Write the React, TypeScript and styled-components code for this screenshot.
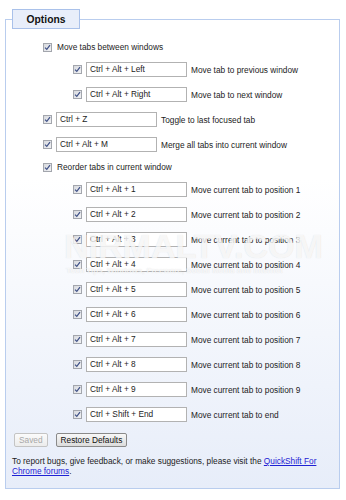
import React from "react";
import styled, {createGlobalStyle} from "styled-components";

const GlobalStyle = createGlobalStyle`
  html, body {
    margin: 0;
    padding: 0;
    background: #fff;
  }
  body {
    font-family: "Liberation Sans", Arial, sans-serif;
    font-size: 8.3px;
    color: #1c1c1c;
  }
`;

const Page = styled.div`
  position: relative;
  width: 346px;
  height: 500px;
  overflow: hidden;
  padding: 9px 6px 0 5px;
  box-sizing: border-box;
`;

const Panel = styled.fieldset`
  margin: 0;
  height: 480px;
  box-sizing: border-box;
  border: 1px solid #b9cdee;
  padding: 0 6px 0 6px;
  background: linear-gradient(to bottom, #ffffff 0%, #ffffff 34%, #e7edf9 100%);
`;

const Legend = styled.legend`
  box-sizing: border-box;
  width: 68px;
  height: 20px;
  padding: 0;
  margin: 0;
  border: 1px solid #a9c1ea;
  background: #e8eefa;
`;

const LegendText = styled.span`
  display: flex;
  justify-content: center;
  align-items: center;
  height: 18px;
  font-size: 10.3px;
  font-weight: bold;
  color: #111;
`;

const List = styled.div`
  display: flex;
  flex-direction: column;
  gap: 10px;
  margin-top: 13px;
`;

const Row = styled.div<{ $level: number; $plain?: boolean }>`
  display: flex;
  align-items: center;
  height: ${p => (p.$plain ? 10 : 15)}px;
  padding-left: ${p => (p.$level === 1 ? 31 : 61)}px;
  white-space: nowrap;
`;

const Check = styled.span`
  display: inline-flex;
  align-items: center;
  justify-content: center;
  box-sizing: border-box;
  width: 9px;
  height: 9px;
  border: 1px solid #a3a6ad;
  background: linear-gradient(to bottom right, #d7d9de, #f1f2f4);
  flex-shrink: 0;
`;

const Key = styled.div`
  box-sizing: border-box;
  width: 101px;
  height: 15px;
  border: 1px solid #b2b2b2;
  background: #fff;
  padding-left: 3px;
  line-height: 13px;
  margin-left: 4px;
  flex-shrink: 0;
`;

const Label = styled.span<{ $afterKey?: boolean }>`
  margin-left: ${p => (p.$afterKey ? 4 : 5)}px;
`;

const Buttons = styled.div`
  display: flex;
  gap: 8px;
  margin-top: 11px;
  padding-left: 2px;
`;

const Button = styled.button`
  box-sizing: border-box;
  height: 14px;
  padding: 0 4px;
  font-family: inherit;
  font-size: 8.3px;
  line-height: 12px;
  border: 1px solid #8a8a8a;
  border-radius: 2px;
  background: linear-gradient(to bottom, #f8f8f8, #dcdcdc);
  color: #111;

  &:disabled {
    border-color: #c4c4c4;
    color: #a8a8a8;
    background: linear-gradient(to bottom, #fbfbfb, #ececec);
  }
`;

const Footer = styled.p`
  margin: 9px 0 0 0;
  line-height: 10px;
  width: 312px;
`;

const Link = styled.a`
  color: #1f22d4;
  text-decoration: underline;
`;

const Watermark = styled.div`
  position: absolute;
  left: 64px;
  top: 228px;
  width: 276px;
  pointer-events: none;
  color: rgba(255, 255, 255, 0.75);
  text-shadow: 0 0 1px rgba(150, 150, 150, 0.3);
`;

const MarkTitle = styled.div`
  font-size: 34px;
  font-weight: bold;
  line-height: 36px;
`;

const MarkSub = styled.div`
  font-size: 8px;
  font-weight: bold;
  margin-top: 2px;
  padding-left: 2px;
  white-space: nowrap;
`;

const CheckBox = () => (
  <Check>
    <svg width="7" height="7" viewBox="0 0 7 7">
      <path d="M1 3.6 L2.8 5.4 L6 1.2" fill="none" stroke="#3d4f86" strokeWidth="1.2"/>
    </svg>
  </Check>
);

type Item = { level: number; key?: string; label: string };

const items: Item[] = [
  {level: 1, label: "Move tabs between windows"},
  {level: 2, key: "Ctrl + Alt + Left", label: "Move tab to previous window"},
  {level: 2, key: "Ctrl + Alt + Right", label: "Move tab to next window"},
  {level: 1, key: "Ctrl + Z", label: "Toggle to last focused tab"},
  {level: 1, key: "Ctrl + Alt + M", label: "Merge all tabs into current window"},
  {level: 1, label: "Reorder tabs in current window"},
  ...[1, 2, 3, 4, 5, 6, 7, 8, 9].map(n => ({
    level: 2,
    key: `Ctrl + Alt + ${n}`,
    label: `Move current tab to position ${n}`,
  })),
  {level: 2, key: "Ctrl + Shift + End", label: "Move current tab to end"},
];

export default function App() {
  return (
    <Page>
      <GlobalStyle/>
      <Panel>
        <Legend><LegendText>Options</LegendText></Legend>
        <List>
          {items.map((item, i) => (
            <Row key={`opt-${i}`} $level={item.level} $plain={!item.key}>
              <CheckBox/>
              {item.key && <Key>{item.key}</Key>}
              <Label $afterKey={!!item.key}>{item.label}</Label>
            </Row>
          ))}
        </List>
        <Buttons>
          <Button disabled>Saved</Button>
          <Button>Restore Defaults</Button>
        </Buttons>
        <Footer>
          To report bugs, give feedback, or make suggestions, please visit the{" "}
          <Link href="#">QuickShift For Chrome forums</Link>.
        </Footer>
      </Panel>
      <Watermark>
        <MarkTitle>NIRMALTV.COM</MarkTitle>
        <MarkSub>Tech Tips, Windows, Freeware, Social Media and Internet</MarkSub>
      </Watermark>
    </Page>
  );
}
